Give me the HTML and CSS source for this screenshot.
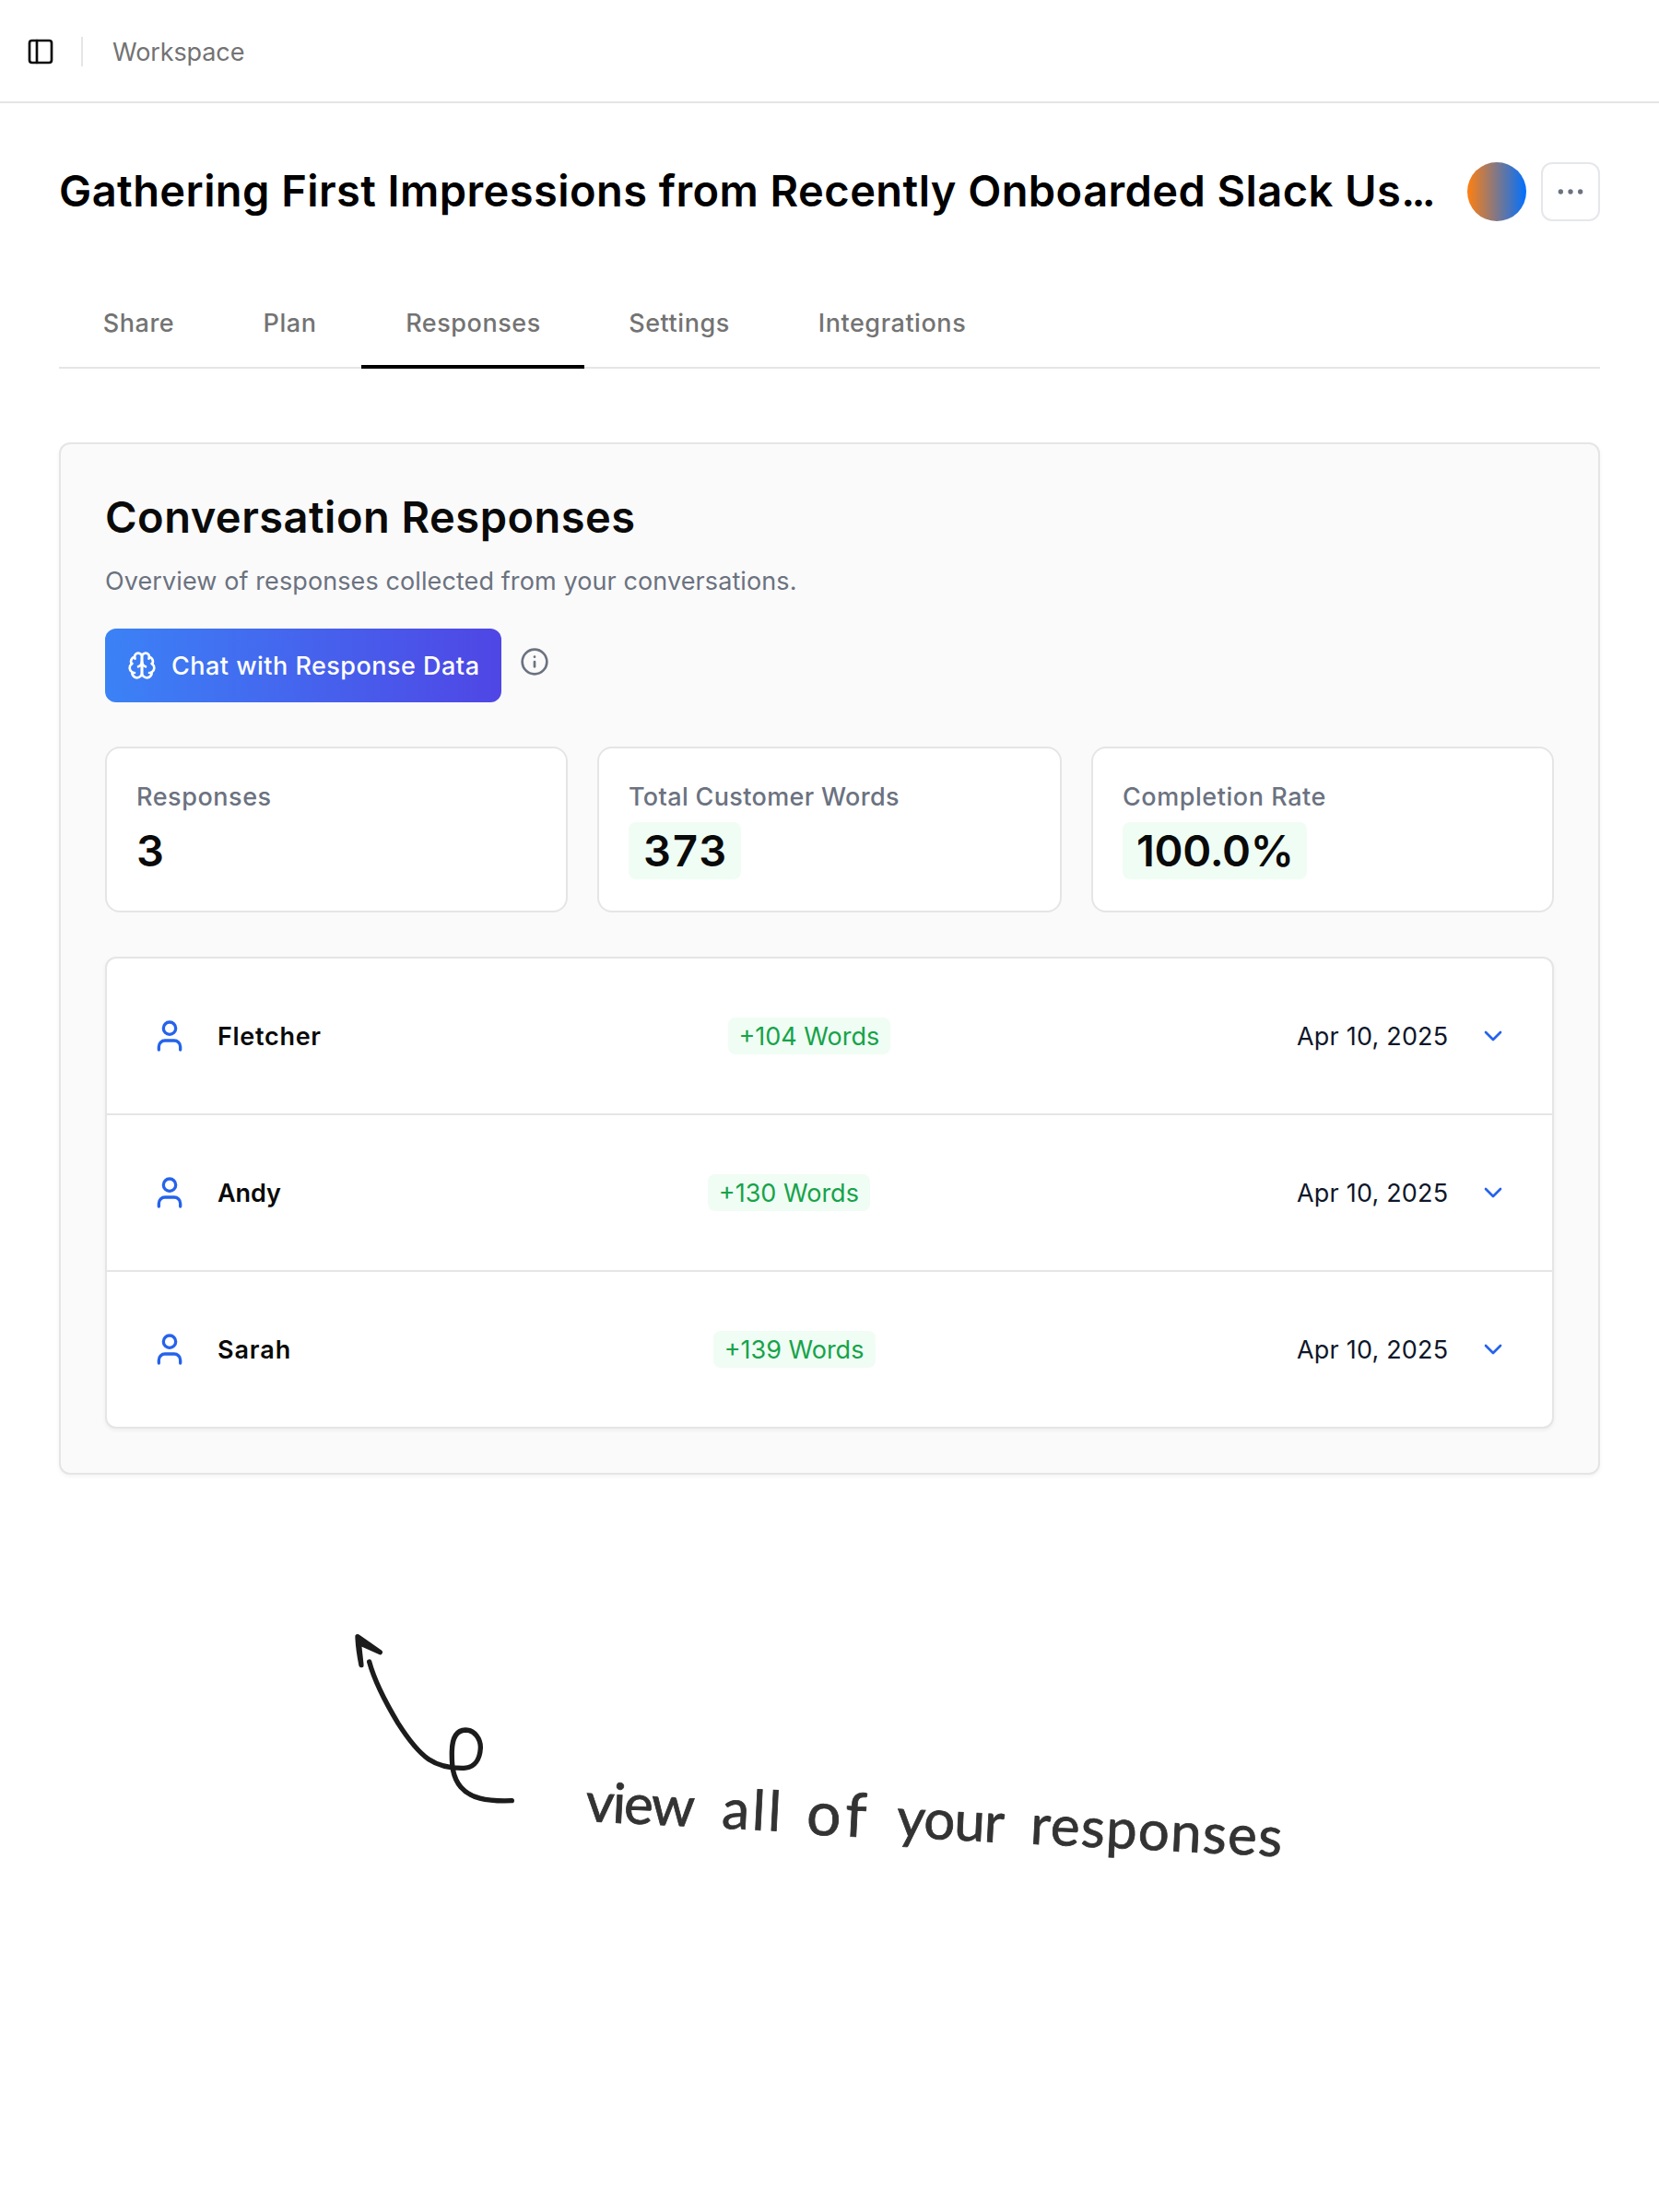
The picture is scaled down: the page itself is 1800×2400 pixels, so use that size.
FILE: index.html
```html
<!DOCTYPE html>
<html lang="en">
<head>
<meta charset="utf-8">
<title>Conversation Responses</title>
<link rel="stylesheet" href="styles.css">
</head>
<body>
<svg class="defs" aria-hidden="true">
  <symbol id="user" viewBox="0 0 24 24"><path d="M19 21v-2a4 4 0 0 0-4-4H9a4 4 0 0 0-4 4v2"/><circle cx="12" cy="7" r="4"/></symbol>
  <symbol id="chevron" viewBox="0 0 24 24"><path d="m6 9 6 6 6-6"/></symbol>
</svg>
<header class="topbar">
  <svg class="icon panel-icon" viewBox="0 0 24 24"><rect x="3" y="3" width="18" height="18" rx="2"/><path d="M9 3v18"/></svg>
  <span class="separator"></span>
  <span class="crumb">Workspace</span>
</header>
<main class="page">
  <div class="title-row">
    <h1 class="title">Gathering First Impressions from Recently Onboarded Slack Us<span class="dots">...</span></h1>
    <span class="avatar"></span>
    <button class="more"><svg class="icon more-icon" viewBox="0 0 24 24"><circle cx="12" cy="12" r="1"/><circle cx="20" cy="12" r="1"/><circle cx="4" cy="12" r="1"/></svg></button>
  </div>
  <nav class="tabs">
    <a class="tab">Share</a>
    <a class="tab">Plan</a>
    <a class="tab active">Responses</a>
    <a class="tab">Settings</a>
    <a class="tab">Integrations</a>
  </nav>
  <section class="panel">
    <h2 class="heading">Conversation Responses</h2>
    <p class="sub">Overview of responses collected from your conversations.</p>
    <div class="actions">
      <button class="chat">
        <svg class="icon" viewBox="0 0 24 24"><path d="M12 5a3 3 0 1 0-5.997.125 4 4 0 0 0-2.526 5.77 4 4 0 0 0 .556 6.588A4 4 0 1 0 12 18Z"/><path d="M12 5a3 3 0 1 1 5.997.125 4 4 0 0 1 2.526 5.77 4 4 0 0 1-.556 6.588A4 4 0 1 1 12 18Z"/><path d="M15 13a4.5 4.5 0 0 1-3-4 4.5 4.5 0 0 1-3 4"/><path d="M17.599 6.5a3 3 0 0 0 .399-1.375"/><path d="M6.003 5.125A3 3 0 0 0 6.401 6.5"/><path d="M3.477 10.896a4 4 0 0 1 .585-.396"/><path d="M19.938 10.5a4 4 0 0 1 .585.396"/><path d="M6 18a4 4 0 0 1-1.967-.516"/><path d="M19.967 17.484A4 4 0 0 1 18 18"/></svg>
        <span class="chat-text">Chat with Response Data</span>
      </button>
      <svg class="icon info" viewBox="0 0 24 24"><circle cx="12" cy="12" r="10"/><path d="M12 16v-4"/><path d="M12 8h.01"/></svg>
    </div>
    <div class="stats">
      <div class="stat"><div class="label">Responses</div><div class="value">3</div></div>
      <div class="stat"><div class="label total">Total Customer Words</div><div class="value badge count">373</div></div>
      <div class="stat"><div class="label">Completion Rate</div><div class="value badge rate">100.0%</div></div>
    </div>
    <div class="list">
      <div class="row">
        <div class="person"><svg class="icon user"><use href="#user"/></svg><span class="name">Fletcher</span></div>
        <span class="words">+104 Words</span>
        <div class="when"><span class="date">Apr 10, 2025</span><svg class="icon chevron"><use href="#chevron"/></svg></div>
      </div>
      <div class="row">
        <div class="person"><svg class="icon user"><use href="#user"/></svg><span class="name short">Andy</span></div>
        <span class="words">+130 Words</span>
        <div class="when"><span class="date">Apr 10, 2025</span><svg class="icon chevron"><use href="#chevron"/></svg></div>
      </div>
      <div class="row">
        <div class="person"><svg class="icon user"><use href="#user"/></svg><span class="name wide">Sarah</span></div>
        <span class="words">+139 Words</span>
        <div class="when"><span class="date">Apr 10, 2025</span><svg class="icon chevron"><use href="#chevron"/></svg></div>
      </div>
    </div>
  </section>
</main>
<aside class="note">
  <svg class="arrow" viewBox="0 0 720 690"><path d="M586 611C500 614 450 602 420 567C393 535 390 495 391 450C392 405 408 382 435 381C465 381 485 410 484 440C482 475 466 504 430 505C385 506 345 496 315 476C280 452 245 405 215 358C182 303 138 218 122 159"/><path class="head" d="M96 170C90 140 85 110 84 77L157 128L88 97Z"/></svg>
  <p class="hand"><span class="w1">view</span> <span class="w2">all</span> <span class="w3">of</span> <span class="w4">your</span> <span class="w5">responses</span></p>
</aside>
</body>
</html>
```
FILE: styles.css
```css
* { box-sizing: border-box; margin: 0; padding: 0; }
body { font: 400 27px/40px Inter, "Liberation Sans", sans-serif; color: #0a0a0a; background: #fff; height: 2400px; overflow: hidden; }
button { font: inherit; border: 0; }
.defs { display: none; }
.icon { width: 32px; height: 32px; flex: none; display: block; fill: none; stroke: currentColor; stroke-width: 2; stroke-linecap: round; stroke-linejoin: round; }

.topbar { height: 112px; border-bottom: 2px solid #e5e5e5; padding: 2px 28px 0; display: flex; align-items: center; }
.separator { width: 2px; height: 32px; margin-left: 28px; background: #e5e5e5; }
.crumb { margin-left: 32px; padding-top: 2px; color: #737373; letter-spacing: -.1px; }

.page { padding: 64px 64px 0; }
.title-row { display: flex; height: 64px; gap: 16px; }
.title { flex: 1; font-size: 47px; font-weight: 600; line-height: 62px; letter-spacing: .43px; color: #000; white-space: nowrap; }
.dots { letter-spacing: -3.8px; }
.avatar { width: 64px; height: 64px; border-radius: 50%; background: linear-gradient(90deg, #ff7f11, #0070ff); }
.more { width: 64px; height: 64px; border: 2px solid #e5e7eb; border-radius: 12px; background: #fff; color: #6b7280; display: grid; place-items: center; }

.tabs { margin-top: 91px; display: flex; height: 69px; box-shadow: inset 0 -2px #e5e5e5; letter-spacing: .55px; }
.tab { font-weight: 500; color: #737373; text-align: center; border-bottom: 4px solid transparent; width: 172px; padding-left: 1px; }
.tab:nth-child(2) { width: 156px; }
.tab:nth-child(3) { width: 242px; }
.tab:nth-child(4) { width: 205px; }
.tab:nth-child(5) { width: 257px; }
.tab.active { border-color: #000; }

.panel { margin-top: 80px; height: 1120px; padding: 48px; border: 2px solid #e5e5e5; border-radius: 12px; background: #fafafa; box-shadow: 0 2px 4px rgba(0, 0, 0, .05); }
.heading { font-size: 47px; font-weight: 600; line-height: 62px; letter-spacing: .48px; }
.sub { margin-top: 19px; color: #6b7280; letter-spacing: .1px; }
.actions { margin-top: 31px; display: flex; gap: 20px; }
.chat { width: 430px; height: 80px; padding-left: 24px; border-radius: 12px; background: linear-gradient(90deg, #3b82f6, #4f46e5); color: #fff; font-weight: 500; letter-spacing: .48px; display: flex; align-items: center; gap: 16px; white-space: nowrap; }
.chat-text { padding-top: 2px; }
.info { margin-top: 20px; color: #6b7280; }

.stats { margin-top: 48px; display: grid; grid-template-columns: 1fr 504px 1fr; gap: 32px; }
.stat { height: 180px; padding: 33px 32px 0; border: 2px solid #e5e5e5; border-radius: 16px; background: #fff; }
.label { color: #6b7280; font-weight: 500; letter-spacing: .55px; }
.label.total { letter-spacing: .35px; }
.value { margin-top: 7px; font-size: 47px; font-weight: 600; line-height: 62px; }
.badge { width: 122px; padding-left: 16px; border-radius: 8px; background: #f0fdf4; }
.count { letter-spacing: 2px; }
.rate { width: 200px; letter-spacing: -.3px; padding-left: 15px; }

.list { margin-top: 48px; border: 2px solid #e5e5e5; border-radius: 12px; background: #fff; box-shadow: 0 2px 4px rgba(0, 0, 0, .05); }
.row { height: 168px; padding: 0 48px; display: flex; align-items: center; justify-content: space-between; }
.row + .row { height: 170px; border-top: 2px solid #e5e5e5; }
.person { display: flex; align-items: center; gap: 32px; }
.user { width: 40px; height: 40px; color: #2563eb; }
.name { padding-top: 2px; font-weight: 600; letter-spacing: .7px; }
.name.short { letter-spacing: -.1px; }
.name.wide { letter-spacing: .9px; }
.words { width: 176px; height: 40px; line-height: 42px; text-align: center; border-radius: 8px; background: #f0fdf4; color: #16a34a; white-space: nowrap; }
.when { display: flex; align-items: center; gap: 32px; }
.date { width: 165px; padding-top: 2px; color: #0f172a; letter-spacing: .2px; white-space: nowrap; }
.chevron { color: #2563eb; }

.note { margin-top: 150px; padding-left: 360px; display: flex; }
.arrow { width: 240px; height: 230px; flex: none; fill: none; stroke: #1c1c1c; stroke-width: 16; stroke-linecap: round; stroke-linejoin: round; }
.head { fill: #1c1c1c; }
.hand { margin: 171px 0 0 35px; height: 64px; font: 400 60px/64px Lato, "Open Sans", cursive; color: #333; -webkit-text-stroke: .8px #333; white-space: nowrap; display: flex; transform: rotate(2.9deg); transform-origin: 0 50px; }
.w1 { width: 148px; letter-spacing: -1.9px; }
.w2 { width: 92px; letter-spacing: 3px; }
.w3 { width: 98px; letter-spacing: 5px; font-size: 66px; }
.w4 { width: 145px; letter-spacing: -.9px; }
.w5 { letter-spacing: 1.3px; }
```
